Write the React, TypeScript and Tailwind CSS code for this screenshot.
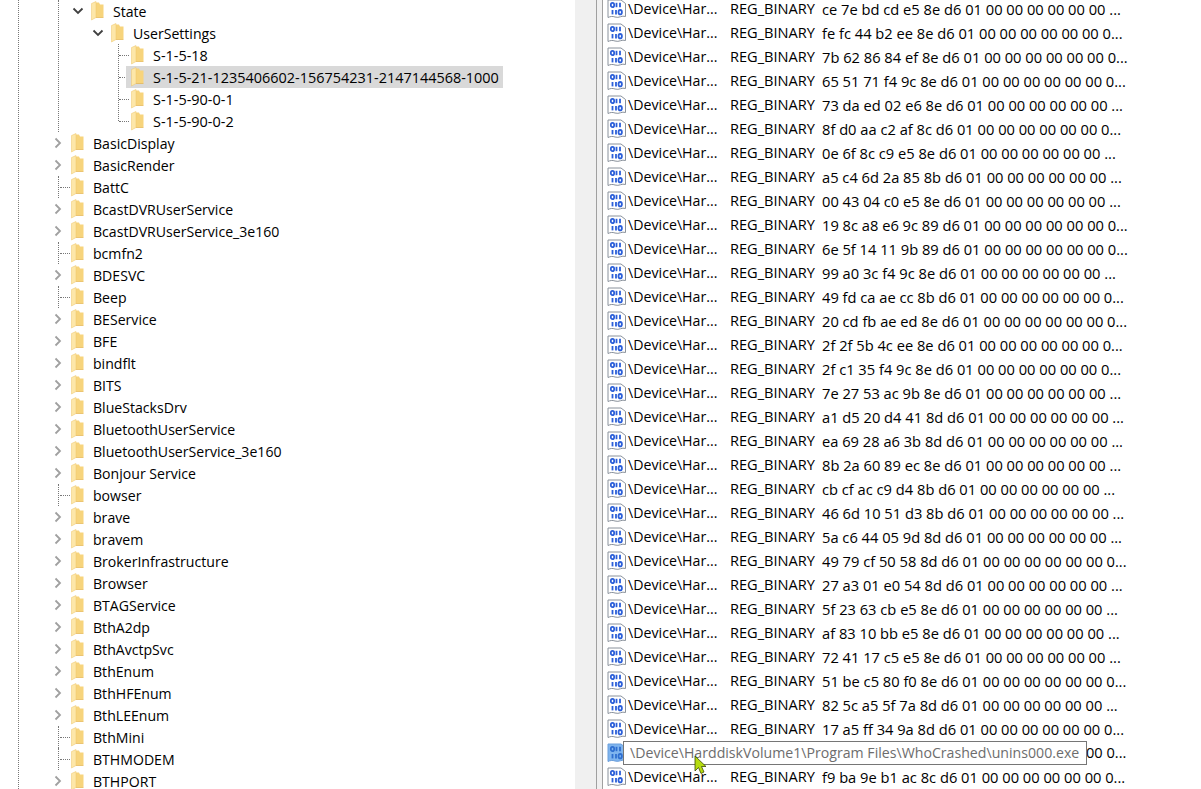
const font = { fontFamily: '"Open Sans", "Noto Sans", sans-serif' };

function Folder() {
  return (
    <svg width="13" height="20" viewBox="0 0 13 20" className="shrink-0">
      <path d="M3 1.5 H8 L9 3.5 H12.5 V16 H3 Z" fill="#f7d47c" />
      <path d="M0.5 2.5 L5 0.5 V16.5 L0.5 19 Z" fill="#fde7a9" />
      <path d="M5 16 H12.5 V16.8 H5 Z" fill="#e6b64f" />
      <path d="M0.5 2.5 L5 0.5 V16.5 L0.5 19 Z" fill="none" stroke="#eec468" strokeWidth="0.5" />
    </svg>
  );
}

function Chevron({ open }: { open?: boolean }) {
  return (
    <svg width="12" height="12" viewBox="0 0 12 12" className="shrink-0">
      {open ? (
        <path d="M1.5 3.5 L6 8 L10.5 3.5" fill="none" stroke="#404040" strokeWidth="1.8" />
      ) : (
        <path d="M3.5 1.5 L8 6 L3.5 10.5" fill="none" stroke="#a0a0a0" strokeWidth="1.8" />
      )}
    </svg>
  );
}

type Top = { t: string; c: boolean };
const tops: Top[] = [
  { t: "BasicDisplay", c: true },
  { t: "BasicRender", c: true },
  { t: "BattC", c: false },
  { t: "BcastDVRUserService", c: true },
  { t: "BcastDVRUserService_3e160", c: true },
  { t: "bcmfn2", c: false },
  { t: "BDESVC", c: true },
  { t: "Beep", c: false },
  { t: "BEService", c: true },
  { t: "BFE", c: true },
  { t: "bindflt", c: true },
  { t: "BITS", c: true },
  { t: "BlueStacksDrv", c: true },
  { t: "BluetoothUserService", c: true },
  { t: "BluetoothUserService_3e160", c: true },
  { t: "Bonjour Service", c: true },
  { t: "bowser", c: false },
  { t: "brave", c: true },
  { t: "bravem", c: true },
  { t: "BrokerInfrastructure", c: true },
  { t: "Browser", c: true },
  { t: "BTAGService", c: true },
  { t: "BthA2dp", c: true },
  { t: "BthAvctpSvc", c: true },
  { t: "BthEnum", c: true },
  { t: "BthHFEnum", c: true },
  { t: "BthLEEnum", c: true },
  { t: "BthMini", c: false },
  { t: "BTHMODEM", c: false },
  { t: "BTHPORT", c: true },
];

const sids = ["S-1-5-18", "S-1-5-21-1235406602-156754231-2147144568-1000", "S-1-5-90-0-1", "S-1-5-90-0-2"];

const values = [
  "ce 7e bd cd e5 8e d6 01 00 00 00 00 00 00 ...",
  "fe fc 44 b2 ee 8e d6 01 00 00 00 00 00 00 0...",
  "7b 62 86 84 ef 8e d6 01 00 00 00 00 00 00 0...",
  "65 51 71 f4 9c 8e d6 01 00 00 00 00 00 00 0...",
  "73 da ed 02 e6 8e d6 01 00 00 00 00 00 00 ...",
  "8f d0 aa c2 af 8c d6 01 00 00 00 00 00 00 0...",
  "0e 6f 8c c9 e5 8e d6 01 00 00 00 00 00 00 ...",
  "a5 c4 6d 2a 85 8b d6 01 00 00 00 00 00 00 ...",
  "00 43 04 c0 e5 8e d6 01 00 00 00 00 00 00 ...",
  "19 8c a8 e6 9c 89 d6 01 00 00 00 00 00 00 0...",
  "6e 5f 14 11 9b 89 d6 01 00 00 00 00 00 00 0...",
  "99 a0 3c f4 9c 8e d6 01 00 00 00 00 00 00 ...",
  "49 fd ca ae cc 8b d6 01 00 00 00 00 00 00 0...",
  "20 cd fb ae ed 8e d6 01 00 00 00 00 00 00 0...",
  "2f 2f 5b 4c ee 8e d6 01 00 00 00 00 00 00 0...",
  "2f c1 35 f4 9c 8e d6 01 00 00 00 00 00 00 0...",
  "7e 27 53 ac 9b 8e d6 01 00 00 00 00 00 00 ...",
  "a1 d5 20 d4 41 8d d6 01 00 00 00 00 00 00 ...",
  "ea 69 28 a6 3b 8d d6 01 00 00 00 00 00 00 ...",
  "8b 2a 60 89 ec 8e d6 01 00 00 00 00 00 00 ...",
  "cb cf ac c9 d4 8b d6 01 00 00 00 00 00 00 ...",
  "46 6d 10 51 d3 8b d6 01 00 00 00 00 00 00 ...",
  "5a c6 44 05 9d 8d d6 01 00 00 00 00 00 00 ...",
  "49 79 cf 50 58 8d d6 01 00 00 00 00 00 00 0...",
  "27 a3 01 e0 54 8d d6 01 00 00 00 00 00 00 ...",
  "5f 23 63 cb e5 8e d6 01 00 00 00 00 00 00 ...",
  "af 83 10 bb e5 8e d6 01 00 00 00 00 00 00 ...",
  "72 41 17 c5 e5 8e d6 01 00 00 00 00 00 00 ...",
  "51 be c5 80 f0 8e d6 01 00 00 00 00 00 00 0...",
  "82 5c a5 5f 7a 8d d6 01 00 00 00 00 00 00 ...",
  "17 a5 ff 34 9a 8d d6 01 00 00 00 00 00 00 0...",
  "",
  "f9 ba 9e b1 ac 8c d6 01 00 00 00 00 00 00 0...",
];

function BinIcon({ hover }: { hover?: boolean }) {
  const blue = hover ? "#2f6fd0" : "#2b5fd9";
  return (
    <svg width="20" height="20" viewBox="0 0 20 20" className="shrink-0 mr-px">
      <path
        d="M1 1 H14 L18.5 4.5 V17.5 C15 16 12 19.5 8 18 C5.5 17 3 17.5 1 18.5 Z"
        fill={hover ? "#7fb4ee" : "#ffffff"}
        stroke={hover ? "#6b9fdc" : "#8a929c"}
        strokeWidth="1"
      />
      <g fill="none" stroke={blue} strokeWidth="1.8">
        <ellipse cx="5.5" cy="6" rx="1.7" ry="2.2" />
        <path d="M9.5 3.8 V8.2" />
        <path d="M13 3.8 V8.2" />
        <path d="M5.5 11 V15.4" />
        <path d="M9 11 V15.4" />
        <ellipse cx="13.2" cy="13.2" rx="1.7" ry="2.2" />
      </g>
    </svg>
  );
}

function Row({ indent, children }: { indent: number; children: any }) {
  return (
    <div className="relative h-[22px] flex items-center" style={{ paddingLeft: indent }}>
      {children}
    </div>
  );
}

export default function App() {
  return (
    <div className="w-[1201px] h-[789px] overflow-hidden bg-white flex text-[14.6px] text-black" style={font}>
      <div className="w-[575px] h-full relative shrink-0 overflow-hidden text-[14.1px]">
        <div className="absolute left-[18px] top-0 bottom-0 border-l border-dotted border-[#777777]" />
        <div className="absolute left-[58px] top-0 h-[132px] border-l border-dotted border-[#777777]" />
        <div className="absolute left-[118px] top-[44px] h-[77px] border-l border-dotted border-[#777777]" />

        <Row indent={72}>
          <span className="w-[19px] shrink-0"><Chevron open /></span>
          <Folder />
          <span className="ml-[9px] pt-[2px]">State</span>
        </Row>
        <Row indent={92}>
          <span className="w-[19px] shrink-0"><Chevron open /></span>
          <Folder />
          <span className="ml-[9px] pt-[2px]">UserSettings</span>
        </Row>
        {sids.map((s, i) => (
          <Row key={s} indent={131}>
            <div className="absolute left-[119px] top-[11px] w-[10px] border-t border-dotted border-[#777777]" />
            {i === 1 && <div className="absolute left-[126px] top-0 w-[377px] h-full bg-[#d9d9d9]" />}
            <span className="relative flex items-center">
              <Folder />
              <span className="ml-[9px] pt-[2px] whitespace-nowrap text-[14.45px]">{s}</span>
            </span>
          </Row>
        ))}
        {tops.map((r) => (
          <Row key={r.t} indent={r.c ? 52 : 71}>
            {r.c ? (
              <span className="w-[19px] shrink-0"><Chevron /></span>
            ) : (
              <>
                <div className="absolute left-[58px] top-0 h-[22px] border-l border-dotted border-[#777777]" />
                <div className="absolute left-[60px] top-[11px] w-[10px] border-t border-dotted border-[#777777]" />
              </>
            )}
            <Folder />
            <span className="ml-[9px] pt-[2px] whitespace-nowrap">{r.t}</span>
          </Row>
        ))}
      </div>

      <div className="w-[21px] h-full bg-[#f0f0f0] shrink-0" />
      <div className="w-px h-full bg-[#a0a0a0] shrink-0" />
      <div className="w-[6px] h-full bg-[#f0f0f0] border-r border-[#a0a0a0] shrink-0" />

      <div className="flex-1 relative overflow-hidden -mt-[3px]">
        {values.map((v, i) => (
          <div key={i} className="h-[24px] flex items-center pl-[4px] whitespace-nowrap">
            <BinIcon hover={i === 31} />
            <span className="w-[102px] shrink-0 text-[14.2px]">{i === 31 ? "" : "\\Device\\Har..."}</span>
            <span className="w-[92px] shrink-0">{i === 31 ? "" : "REG_BINARY"}</span>
            {i === 31 ? <span className="ml-[264px]">00 0...</span> : <span className="text-[14.68px]">{v}</span>}
          </div>
        ))}
        <div className="absolute left-[20px] top-[744px] h-[24px] w-[464px] bg-white border border-[#767676] flex items-center pl-[6px] text-[#6d6d6d] whitespace-nowrap text-[14.15px]">
          \Device\HarddiskVolume1\Program Files\WhoCrashed\unins000.exe
        </div>
        <svg width="14" height="20" viewBox="0 0 14 20" className="absolute left-[91px] top-[758px]">
          <path d="M1 1 V16 L4.5 12.5 L7 18.5 L10 17 L7.5 11.5 H12 Z" fill="#b5dc10" stroke="#3d4a00" strokeWidth="0.8" />
        </svg>
      </div>
    </div>
  );
}
